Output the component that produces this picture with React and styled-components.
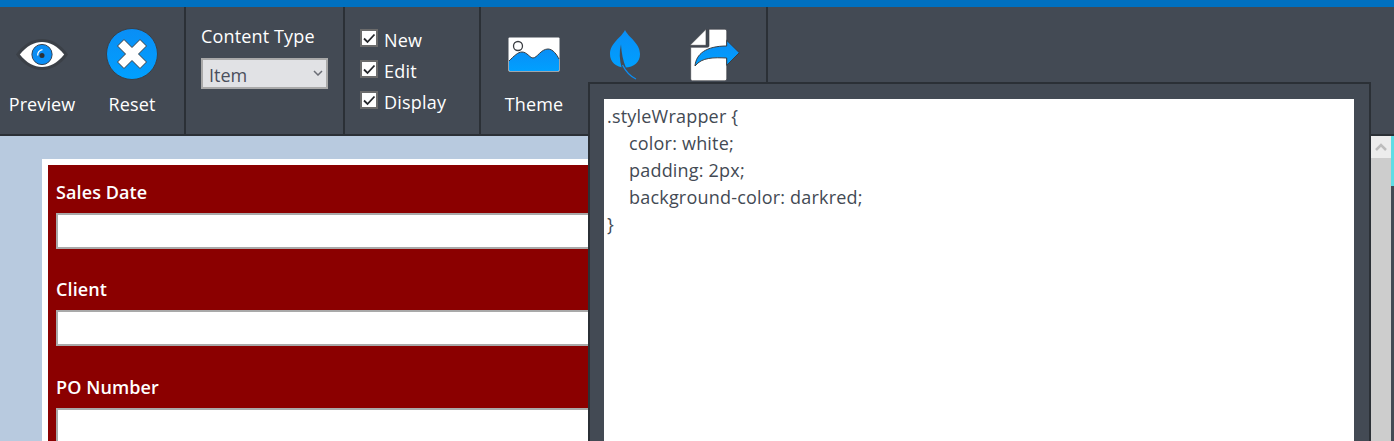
import React from "react";
import styled, { createGlobalStyle } from "styled-components";

const GlobalStyle = createGlobalStyle`
  html, body {
    margin: 0;
    padding: 0;
    height: 100%;
    overflow: hidden;
    background-color: #434a54;
    font-family: "Open Sans", "Noto Sans", sans-serif;
  }
`;

const Page = styled.div`
  width: 1394px;
  height: 441px;
  display: flex;
  flex-direction: column;
  position: relative;
  overflow: hidden;
`;

const TopStrip = styled.div`
  height: 7px;
  background-color: #0070c0;
`;

const Toolbar = styled.div`
  height: 127px;
  flex: none;
  display: flex;
  background-color: #434a54;
  border-bottom: 2px solid #2b3036;
  color: white;
`;

const Group = styled.div`
  width: ${(p) => p.$width}px;
  flex: none;
  display: flex;
  box-sizing: border-box;
  border-right: 2px solid #2b3036;
`;

const ToolButton = styled.div`
  width: ${(p) => p.$width}px;
  flex: none;
  display: flex;
  flex-direction: column;
  align-items: center;
  padding-top: ${(p) => p.$top || 20}px;
  box-sizing: border-box;
`;

const ToolIcon = styled.svg`
  display: block;
  flex: none;
`;

const ToolLabel = styled.span`
  margin-top: ${(p) => p.$gap}px;
  font-size: 18px;
  line-height: 24px;
  letter-spacing: 0.1px;
  white-space: nowrap;
`;

const TypeColumn = styled.div`
  display: flex;
  flex-direction: column;
  padding: 17px 0 0 15px;
`;

const TypeLabel = styled.label`
  font-size: 18px;
  line-height: 24px;
  letter-spacing: 0.15px;
`;

const SelectWrap = styled.div`
  position: relative;
  margin-top: 10px;
  width: 127px;
  height: 31px;
`;

const TypeSelect = styled.select`
  appearance: none;
  display: block;
  width: 100%;
  height: 100%;
  border: 2px solid #a9a9a9;
  border-radius: 0;
  background-color: #e1e2e5;
  color: #4a4f5c;
  font-family: inherit;
  font-size: 18px;
  padding: 2px 0 0 6px;
`;

const SelectChevron = styled.svg`
  position: absolute;
  right: 5px;
  top: 12px;
  pointer-events: none;
`;

const CheckColumn = styled.div`
  display: flex;
  flex-direction: column;
  gap: 7px;
  padding: 21px 0 0 15px;
`;

const CheckRow = styled.label`
  display: flex;
  align-items: center;
  gap: 6px;
  height: 24px;
  font-size: 18px;
  letter-spacing: 0.2px;
`;

const CheckBox = styled.span`
  width: 18px;
  height: 18px;
  flex: none;
  display: flex;
  margin-top: -4px;
  box-sizing: border-box;
  border: 2px solid #6b6b6b;
  background-color: white;
`;

const Body = styled.div`
  flex: 1;
  min-height: 0;
  display: flex;
`;

const Canvas = styled.div`
  flex: 1;
  min-width: 0;
  overflow: hidden;
  background-color: #b8cadf;
  padding: 23px 31px 0 42px;
`;

const FormSheet = styled.div`
  border: solid white;
  border-width: 6px 6px 0;
  background-color: #8b0000;
  padding: 15px 8px 60px;
  display: flex;
  flex-direction: column;
  gap: 28.4px;
`;

const Field = styled.div`
  display: flex;
  flex-direction: column;
  gap: 9px;
`;

const FieldLabel = styled.label`
  color: white;
  font-size: 18px;
  font-weight: 600;
  line-height: 24px;
  letter-spacing: 0.1px;
`;

const FieldInput = styled.input`
  height: 36px;
  box-sizing: border-box;
  border: 2px solid #a9a9a9;
  background-color: white;
  padding: 0 6px;
  width: 100%;
`;

const Scrollbar = styled.div`
  width: 20px;
  flex: none;
  background-color: #cdcdcd;
`;

const ScrollArrow = styled.div`
  height: 22px;
  display: flex;
  align-items: center;
  justify-content: center;
  background-color: #ececec;
`;

const SideStrip = styled.div`
  width: 3px;
  flex: none;
  background-color: #434a54;
`;

const SideAccent = styled.div`
  height: 50px;
  background-color: #5fdde5;
`;

const CssPanel = styled.div`
  position: absolute;
  left: 588px;
  top: 82px;
  width: 783px;
  height: 359px;
  box-sizing: border-box;
  background-color: #434a54;
  border: solid #2b3036;
  border-width: 2px 2px 0;
  padding: 15px 15px 0 14px;
`;

const CssEditor = styled.textarea`
  display: block;
  width: 100%;
  height: 100%;
  box-sizing: border-box;
  border: none;
  outline: none;
  resize: none;
  overflow: hidden;
  background-color: white;
  color: #434a54;
  font-family: inherit;
  font-size: 18px;
  line-height: 27px;
  letter-spacing: 0.2px;
  tab-size: 22px;
  padding: 4px 3px;
  white-space: pre;
`;

const BLUE = "url(#iconBlue)";

const IconDefs = () => (
  <svg width="0" height="0" style={{ position: "absolute" }}>
    <defs>
      <linearGradient id="iconBlue" x1="0" y1="0" x2="0" y2="1">
        <stop offset="0" stopColor="#0a8ef5" />
        <stop offset="1" stopColor="#00a0ff" />
      </linearGradient>
    </defs>
  </svg>
);

const EyeIcon = () => (
  <ToolIcon width="54" height="33" viewBox="0 0 56 34">
    <path d="M1 17C9 6 18 1 28 1s19 5 27 16c-8 11-17 16-27 16S9 28 1 17z" fill="#3b4047" />
    <path d="M5 17C12 8 20 4 28 4s16 4 23 13c-7 9-15 13-23 13S12 26 5 17z" fill="white" />
    <circle cx="28" cy="17" r="10.5" fill="#0a8ef5" stroke="#33404f" strokeWidth="1" />
    <circle cx="28" cy="18" r="2.6" fill="#2b3036" />
    <path d="M23.5 18a5.5 5.5 0 0 1 5-6" fill="none" stroke="white" strokeWidth="1.4" />
  </ToolIcon>
);

const ResetIcon = () => (
  <ToolIcon width="52" height="52" viewBox="0 0 52 52">
    <circle cx="26" cy="26" r="25.5" fill={BLUE} stroke="#3a4048" strokeWidth="1" />
    <path
      d="M18 11.5L26 19.5 34 11.5 40.500 18 32.500 26 40.500 34 34 40.500 26 32.500 18 40.500 11.500 34 19.500 26 11.500 18z"
      fill="white"
      stroke="#3a3d42"
      strokeWidth="1"
      strokeLinejoin="round"
    />
  </ToolIcon>
);

const ThemeIcon = () => (
  <ToolIcon width="52" height="35" viewBox="0 0 52 35">
    <rect x="0.5" y="0.5" width="51" height="34" rx="1" fill="white" />
    <circle cx="10" cy="9" r="4.500" fill="white" stroke="#3a3d42" strokeWidth="1.300" />
    <path d="M1 24C6 19 10 15 14 15c5 0 8 6 11 6 4 0 8-9 15-9 5 0 9 6 11 10v11a1 1 0 0 1-1 1H2a1 1 0 0 1-1-1z" fill={BLUE} />
    <path d="M1 24C6 19 10 15 14 15c5 0 8 6 11 6 4 0 8-9 15-9 5 0 9 6 11 10" fill="none" stroke="#3a3d42" strokeWidth="1" />
  </ToolIcon>
);

const LeafIcon = () => (
  <ToolIcon width="32" height="51" viewBox="0 0 32 51">
    <path d="M16 1C13 8 1 14 1 25c0 8 6 13.500 15 13.500 9 0 15-5.500 15-13.500C31 14 19 8 16 1z" fill={BLUE} />
    <path d="M12 15.500C10 23 10.500 31 12.700 38.800H17C14 32 12.500 24 12 15.500z" fill="#434a54" />
    <path d="M13.500 36c3 6 7 11 13.500 14" fill="none" stroke="#0a8ef5" strokeWidth="1.300" />
  </ToolIcon>
);

const ShareIcon = () => (
  <ToolIcon width="53" height="53" viewBox="0 0 53 53">
    <path d="M2 17.300L18 1.300V17.300z" fill="white" stroke="#3a3d42" strokeWidth="0.600" strokeLinejoin="round" />
    <path d="M21 1.300H37a1.700 1.700 0 0 1 1.700 1.700V51a1.700 1.700 0 0 1-1.700 1.700H4.400a1.700 1.700 0 0 1-1.700-1.700V19.300H19.500a1.500 1.500 0 0 0 1.500-1.500z" fill="white" stroke="#3a3d42" strokeWidth="0.600" />
    <path d="M38.700 12.300L51.300 24.700 38.700 37.300V30C26 29.500 14 29 7 38 8 26 18 18 38.700 18z" fill={BLUE} stroke="#3a3d42" strokeWidth="1" strokeLinejoin="round" />
  </ToolIcon>
);

const Tick = () => (
  <svg width="14" height="14" viewBox="0 0 14 14">
    <path d="M2 7.500L5.500 11 12.500 3.500" fill="none" stroke="#26282c" strokeWidth="1.800" />
  </svg>
);

const cssText = `.styleWrapper {
\tcolor: white;
\tpadding: 2px;
\tbackground-color: darkred;
}`;

const fields = ["Sales Date", "Client", "PO Number"];
const views = ["New", "Edit", "Display"];

const App = () => {
  return (
    <Page>
      <GlobalStyle />
      <IconDefs />
      <TopStrip />
      <Toolbar>
        <Group $width={186}>
          <ToolButton $width={84} $top={31}>
            <EyeIcon />
            <ToolLabel $gap={21}>Preview</ToolLabel>
          </ToolButton>
          <ToolButton $width={96} $top={21}>
            <ResetIcon />
            <ToolLabel $gap={12}>Reset</ToolLabel>
          </ToolButton>
        </Group>
        <Group $width={159}>
          <TypeColumn>
            <TypeLabel>Content Type</TypeLabel>
            <SelectWrap>
              <TypeSelect defaultValue="Item">
                <option>Item</option>
              </TypeSelect>
              <SelectChevron width="10" height="6" viewBox="0 0 10 6">
                <path d="M1 1l4 4 4-4" fill="none" stroke="#6a6d75" strokeWidth="1.500" />
              </SelectChevron>
            </SelectWrap>
          </TypeColumn>
        </Group>
        <Group $width={136}>
          <CheckColumn>
            {views.map((view) => (
              <CheckRow key={view}>
                <CheckBox>
                  <Tick />
                </CheckBox>
                {view}
              </CheckRow>
            ))}
          </CheckColumn>
        </Group>
        <Group $width={287}>
          <ToolButton $width={106} $top={30}>
            <ThemeIcon />
            <ToolLabel $gap={20}>Theme</ToolLabel>
          </ToolButton>
          <ToolButton $width={75} $top={22}>
            <LeafIcon />
          </ToolButton>
          <ToolButton $width={104} $top={21}>
            <ShareIcon />
          </ToolButton>
        </Group>
      </Toolbar>
      <Body>
        <Canvas>
          <FormSheet>
            {fields.map((field) => (
              <Field key={field}>
                <FieldLabel>{field}</FieldLabel>
                <FieldInput />
              </Field>
            ))}
          </FormSheet>
        </Canvas>
        <Scrollbar>
          <ScrollArrow>
            <svg width="12" height="8" viewBox="0 0 12 8">
              <path d="M1 7L6 2l5 5" fill="none" stroke="#bdbdbd" strokeWidth="2.500" />
            </svg>
          </ScrollArrow>
        </Scrollbar>
        <SideStrip>
          <SideAccent />
        </SideStrip>
      </Body>
      <CssPanel>
        <CssEditor defaultValue={cssText} spellCheck={false} />
      </CssPanel>
    </Page>
  );
};

export default App;
